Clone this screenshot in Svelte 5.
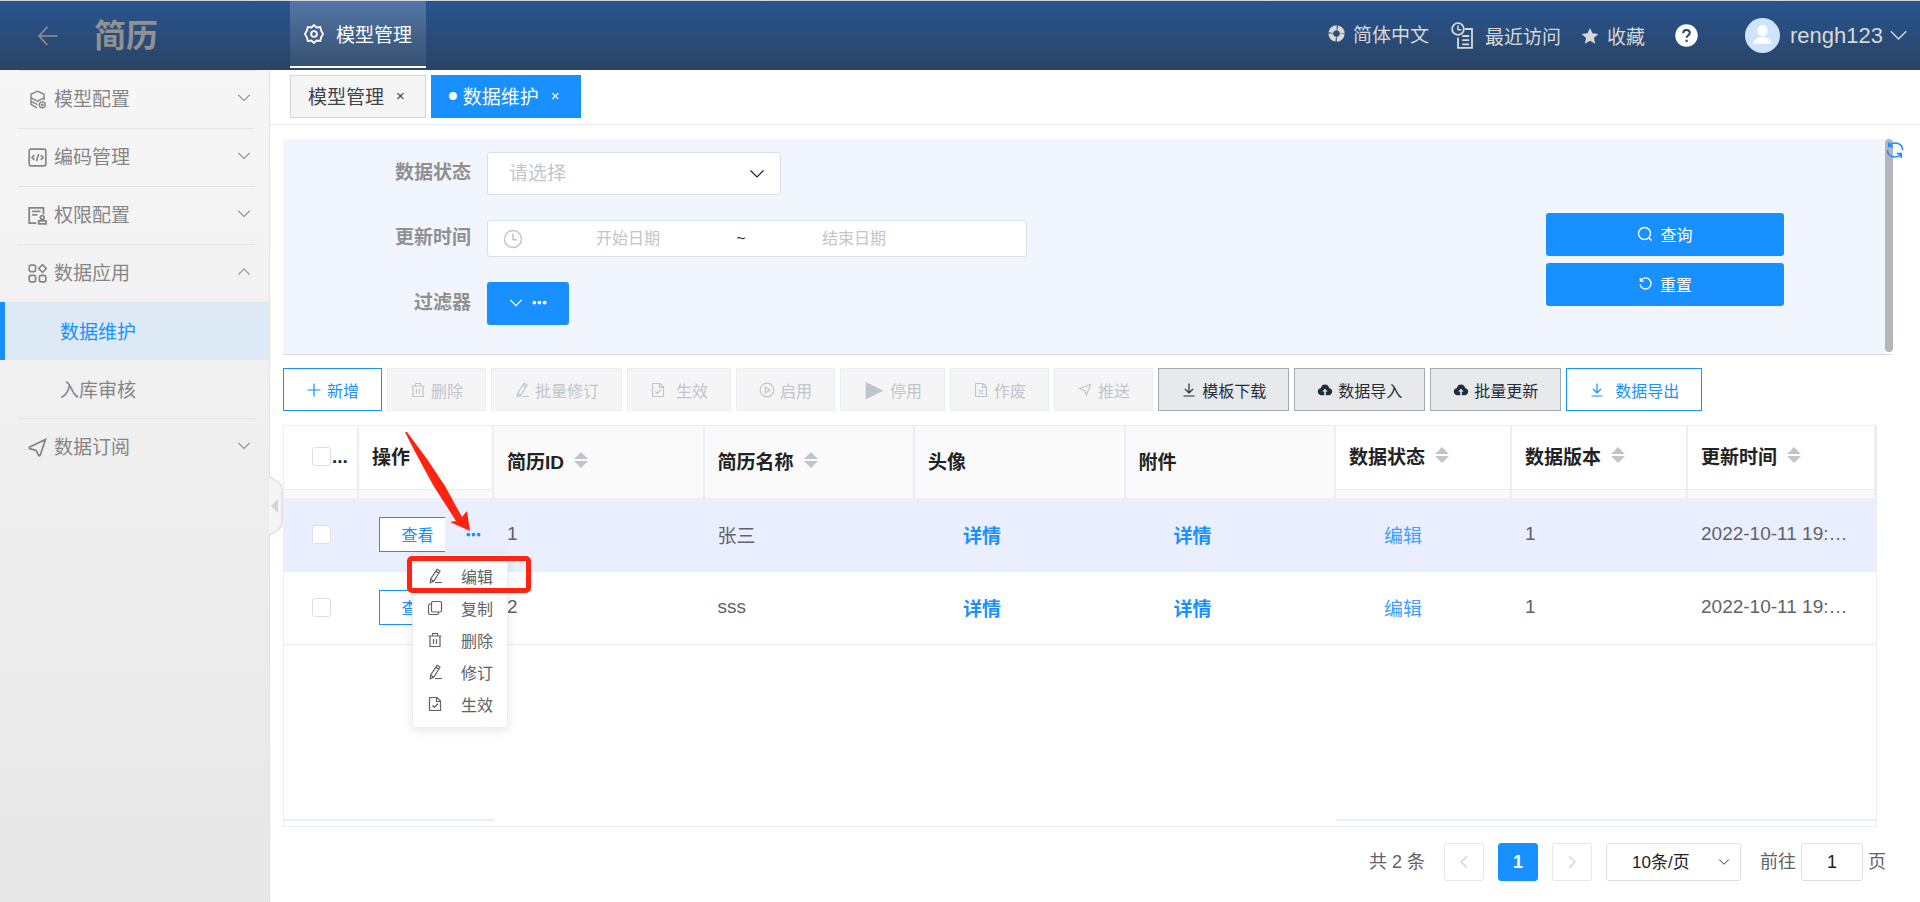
<script>
  const icons = {
    back: '<path d="M15 8H1.5M7.5 1.5L1.5 8l6 6.5"/>',
    gear: '<path d="M8 .9l2.1 1.9 2.9-.3.7 2.9 1.6 2.6-1.6 2.6-.7 2.9-2.9-.3L8 15.1l-2.1-1.9-2.9.3-.7-2.9L.7 8l1.6-2.6.7-2.9 2.9.3z" stroke-width="1.5"/><circle cx="8" cy="8" r="2.3" stroke-width="1.5"/>',
    ring: '<circle cx="8" cy="8" r="5.4" stroke-width="4.6" stroke-dasharray="7.5 .98" stroke-dashoffset="-.5"/>',
    recent: '<path d="M10 5h5v13.5H5V11M8 10h5M8 13h5M8 16h5" stroke-width="1.3"/><circle cx="5" cy="5" r="4.2" stroke-width="1.3"/><path d="M5 2.5V5.5h2.4" stroke-width="1.1"/>',
    star: '<path d="M8 .8l2.2 4.8 5.2.6-3.9 3.5 1.1 5.2L8 12.3l-4.6 2.6 1.1-5.2L.6 6.2l5.2-.6z" fill="currentColor" stroke="none"/>',
    help: '<circle cx="8" cy="8" r="7.8" fill="#fff" stroke="none"/><path d="M5.7 6.4c0-3 4.6-3 4.6-.2 0 1.6-2.2 1.6-2.2 3.4M8.1 11v1.5" stroke="#27415f" stroke-width="1.4"/>',
    avatar: '<circle cx="8" cy="8" r="8" fill="#cce4fd" stroke="none"/><ellipse cx="8" cy="5.8" rx="2.4" ry="2.7" fill="#fff" stroke="none"/><path d="M3.7 11.8c.3-2 1.8-2.6 3-3h2.6c1.2.4 2.7 1 3 3z" fill="#fff" stroke="none"/>',
    down: '<path d="M1.5 4.5L8 11l6.5-6.5"/>',
    up: '<path d="M1.5 11L8 4.5l6.5 6.5"/>',
    left: '<path d="M10.5 3l-5 5 5 5" stroke-width="1.5"/>',
    right: '<path d="M5.5 3l5 5-5 5" stroke-width="1.5"/>',
    layers: '<path d="M8 1l5.5 2.6v3L8 9.400 2.5 6.6v-3z"/><path d="M2.5 6.5v3L8 12.3M2.5 9.5v2.6L7.5 15M13.5 6.6v2"/><circle cx="12" cy="12.5" r="2.5"/><circle cx="12" cy="12.5" r=".6"/>',
    code: '<rect x="1" y="1" width="14" height="14" rx="1.5" stroke-width="1.4"/><path d="M5.3 6l-2 2 2 2M10.7 6l2 2-2 2M9 5l-2 6.2" stroke-width="1.3"/>',
    permission: '<path d="M7 14.5H1v-13h12V7M3.5 4.5h7M3.5 7.5H8" stroke-width="1.5"/><circle cx="12" cy="9.7" r="1.6" stroke-width="1.4"/><path d="M11.3 11v1.5H9V15h6.2v-2.5h-2.5V11" stroke-width="1.4"/>',
    apps: '<rect x="1" y="1" width="5.4" height="5.4" rx="1.5" stroke-width="1.4"/><rect x="1" y="9.6" width="5.4" height="5.4" rx="1.5" stroke-width="1.4"/><rect x="9.6" y="9.6" width="5.4" height="5.4" rx="1.5" stroke-width="1.4"/><path d="M12.2.6l3.2 3.2L12.2 7 9 3.8z" stroke-width="1.4"/>',
    send: '<path d="M14.700 1.3L10.300 14.500Q9.800 15.500 9 14.600L6.800 10.500 1.500 9Q.6 8.300 1.500 7.500z" stroke-width="1.500"/>',
    clock: '<circle cx="8" cy="8" r="6.8"/><path d="M8 4v4.500h3.500"/>',
    dots: '<g fill="currentColor" stroke="none"><circle cx="2.5" cy="8" r="2"/><circle cx="8" cy="8" r="2"/><circle cx="13.5" cy="8" r="2"/></g>',
    search: '<circle cx="7.5" cy="7.5" r="6"/><path d="M12 12l2.5 2.5"/>',
    reset: '<path d="M2.5 2v3.500H6M3 5.200C5 1.5 9.800 1 12.400 4c2.300 2.800 1.800 6.5-.6 8.500C8.300 15.3 3 13.500 2.300 9"/>',
    refresh: '<path d="M2.500 4.500C6 .2 14.500 1 14.800 8M13.500 11.500C10 15.800 1.500 15 1.200 8M2.500 1v3.800h3.800M13.500 15v-3.800H9.700" stroke-width="1.400"/>',
    plus: '<path d="M8 1.5v13M1.5 8h13"/>',
    trash: '<path d="M1.5 4h13M3 4v10.500h10V4M5.5 4V1.500h5V4M6.500 7v5M9.500 7v5"/>',
    edit: '<path d="M10 1.300l3 1.900-6.300 10-3.400 1.600.3-3.600zM8.800 3.200l3 1.900M3.700 11.200l3 2M8 14.500h7"/>',
    docCheck: '<path d="M2.500 1.500H10L13.500 5v9.500h-11zM9.500 1.500v4h4M5.300 9.300l2 2L11 7.800"/>',
    docCross: '<path d="M2.500 1.500H10L13.500 5v9.500h-11zM9.500 1.500v4h4M6 8l4 4M10 8l-4 4"/>',
    playCircle: '<circle cx="8" cy="8" r="6.800"/><path d="M6.300 5l4.400 3-4.400 3z"/>',
    play: '<path d="M2.500 3l11 5.500-11 5.500z" fill="currentColor"/>',
    plane: '<path d="M13.500 2.500L9.500 13l-2-4.500-5-2z"/>',
    download: '<path d="M8 1.500V11M4 7l4 4 4-4M2.500 14h11"/>',
    cloudUp: '<path d="M8 2.500C5.500 2.500 4.200 4 4 6 2 6.300.8 7.800.8 9.600c0 2 1.500 3.700 3.600 3.700h2.800V9.500H5.200L8 6.700l2.800 2.800h-2v3.800h2.800c2.100 0 3.600-1.700 3.600-3.700 0-1.800-1.200-3.300-3.200-3.600-.2-2-1.500-3.500-4-3.500z" fill="currentColor" stroke="none"/>',
    copy: '<rect x="4.500" y="1.500" width="10" height="10.500" rx="1.500"/><path d="M4.500 4H3C2 4 1.500 4.500 1.500 5.500V13c0 1 .5 1.500 1.500 1.500h7c1 0 1.500-.5 1.500-1.500v-1"/>'
  };

  const menus = [
    { icon: "layers", label: "模型配置" },
    { icon: "code", label: "编码管理" },
    { icon: "permission", label: "权限配置" },
    { icon: "apps", label: "数据应用", children: ["数据维护", "入库审核"] },
    { icon: "send", label: "数据订阅" }
  ];

  const tools = [
    { icon: "plus", label: "新增", kind: "primary" },
    { icon: "trash", label: "删除", kind: "off" },
    { icon: "edit", label: "批量修订", kind: "off" },
    { icon: "docCheck", label: "生效", kind: "off", wide: true },
    { icon: "playCircle", label: "启用", kind: "off" },
    { icon: "play", label: "停用", kind: "off", size: 22 },
    { icon: "docCross", label: "作废", kind: "off" },
    { icon: "plane", label: "推送", kind: "off" },
    { icon: "download", label: "模板下载", kind: "dark" },
    { icon: "cloudUp", label: "数据导入", kind: "dark" },
    { icon: "cloudUp", label: "批量更新", kind: "dark" },
    { icon: "download", label: "数据导出", kind: "primary", wide: true }
  ];

  const columns = [
    { label: "简历ID", sort: true },
    { label: "简历名称", sort: true },
    { label: "头像" },
    { label: "附件" },
    { label: "数据状态", sort: true, fixed: true },
    { label: "数据版本", sort: true, fixed: true },
    { label: "更新时间", sort: true, fixed: true }
  ];

  const rows = [
    { id: 1, name: "张三", version: 1, time: "2022-10-11 19:20:35" },
    { id: 2, name: "sss", version: 1, time: "2022-10-11 19:18:02" }
  ];

  const row_menu = [
    { icon: "edit", label: "编辑" },
    { icon: "copy", label: "复制" },
    { icon: "trash", label: "删除" },
    { icon: "edit", label: "修订" },
    { icon: "docCheck", label: "生效" }
  ];

  let active_child = $state("数据维护");
  let open_row = $state(1);
  let page = $state(1);
</script>

{#snippet icon(name, size = 16)}
  <svg
    class="icon"
    width={size}
    height={size}
    viewBox={name === "recent" ? "0 0 20 20" : "0 0 16 16"}
    aria-hidden="true">{@html icons[name]}</svg
  >
{/snippet}

<div class="app">
  <header>
    <div class="brand">
      <button class="plain" aria-label="返回">{@render icon("back", 22)}</button>
      <h1>简历</h1>
    </div>
    <a class="module" href="#model">{@render icon("gear", 20)}模型管理</a>
    <nav class="links">
      <a class="lang" href="#lang">{@render icon("ring", 17)}简体中文</a>
      <a class="recent" href="#recent">{@render icon("recent", 28)}最近访问</a>
      <a class="fav" href="#fav">{@render icon("star", 18)}收藏</a>
      <a class="help" href="#help" aria-label="帮助">{@render icon("help", 23)}</a>
      <button class="plain user">
        {@render icon("avatar", 35)}
        <span>rengh123</span>
        {@render icon("down", 19)}
      </button>
    </nav>
  </header>

  <div class="body">
    <aside>
      <ul class="menu">
        {#each menus as m}
          <li>
            <button class="menu_item">
              {@render icon(m.icon, 19)}
              <span>{m.label}</span>
              {@render icon(m.children ? "up" : "down", 14)}
            </button>
            {#if m.children}
              {#each m.children as c}
                <button
                  class="sub_item"
                  class:active={active_child === c}
                  onclick={() => (active_child = c)}>{c}</button
                >
              {/each}
            {/if}
          </li>
        {/each}
      </ul>
      <button class="collapse" aria-label="收起">
        <svg width="14" height="60" viewBox="0 0 14 60" aria-hidden="true">
          <path d="M0 .5L9 6Q13 9 13 14V46Q13 51 9 54L0 59.5" fill="#f5f5f5" stroke="#e1e5ea" stroke-width="2" />
          <path d="M9 23v14L2 30z" fill="#d4d4d4" />
        </svg>
      </button>
    </aside>

    <main>
      <div class="tabs">
        <button class="tab">模型管理<span class="close">×</span></button>
        <button class="tab current"><i></i>数据维护<span class="close">×</span></button>
      </div>

      <div class="content">
        <section class="search">
          <form onsubmit={(e) => e.preventDefault()}>
            <div class="fields">
              <label for="status">数据状态</label>
              <div class="select status">
                <select id="status">
                  <option>请选择</option>
                </select>
                {@render icon("down", 16)}
              </div>

              <label for="from">更新时间</label>
              <div class="range">
                {@render icon("clock", 20)}
                <input id="from" placeholder="开始日期" />
                <span>~</span>
                <input aria-label="结束日期" placeholder="结束日期" />
              </div>

              <label for="filter">过滤器</label>
              <button id="filter" type="button" class="filled filter">
                {@render icon("down", 14)}{@render icon("dots", 15)}
              </button>
            </div>
            <div class="actions">
              <button class="filled">{@render icon("search", 16)}查询</button>
              <button class="filled" type="reset">{@render icon("reset", 15)}重置</button>
            </div>
          </form>
          <div class="scrollbar"></div>
          <button class="plain refresh" aria-label="刷新">{@render icon("refresh", 18)}</button>
        </section>

        <div class="toolbar">
          {#each tools as t}
            <button class="tool {t.kind}" class:wide={t.wide} disabled={t.kind === "off"}>
              {@render icon(t.icon, t.size)}{t.label}
            </button>
          {/each}
        </div>

        <div class="grid">
          <table>
            <colgroup>
              <col class="c_check" />
              <col class="c_op" />
              <col /><col /><col /><col />
              <col class="c_state" />
              <col class="c_state" />
              <col class="c_time" />
            </colgroup>
            <thead>
              <tr>
                <th>
                  <div class="head fixed check">
                    <input type="checkbox" aria-label="全选" />...
                  </div>
                </th>
                <th><div class="head fixed">操作</div></th>
                {#each columns as c}
                  <th>
                    <div class="head" class:fixed={c.fixed}>
                      {c.label}
                      {#if c.sort}
                        <svg width="14" height="16" viewBox="0 0 14 16" aria-hidden="true">
                          <path d="M7 0l7 7H0zM0 9h14l-7 7z" fill="#c0c4cc" />
                        </svg>
                      {/if}
                    </div>
                  </th>
                {/each}
              </tr>
            </thead>
            <tbody>
              {#each rows as r}
                <tr class:hover={r.id === open_row}>
                  <td class="check"><input type="checkbox" aria-label="选择 {r.id}" /></td>
                  <td class="op">
                    <div class="op_box">
                      <button class="view">查看</button>
                      <button class="plain more" aria-label="更多" onclick={() => (open_row = r.id)}>
                        {@render icon("dots", 15)}
                      </button>
                      {#if r.id === open_row}
                        <ul class="dropdown">
                          {#each row_menu as item}
                            <li>
                              <button class="plain">{@render icon(item.icon)}{item.label}</button>
                            </li>
                          {/each}
                        </ul>
                        <div class="mark"></div>
                        <svg class="arrow" width="68" height="100" viewBox="0 0 68 100" aria-hidden="true">
                          <path d="M0 0h2l20 27 18 27 17 31 5-6 3 20-20-9 6-1-23-36L8 16z" fill="#ff2310" />
                        </svg>
                      {/if}
                    </div>
                  </td>
                  <td>{r.id}</td>
                  <td>{r.name}</td>
                  <td class="inset"><a class="bold" href="#photo">详情</a></td>
                  <td class="inset"><a class="bold" href="#attach">详情</a></td>
                  <td class="inset"><a class="state" href="#state">编辑</a></td>
                  <td>{r.version}</td>
                  <td>{r.time}</td>
                </tr>
              {/each}
            </tbody>
          </table>
          <div class="fixed_ends"><i></i><i></i></div>
        </div>

        <div class="pager">
          <span class="total">共 2 条</span>
          <button class="page" disabled aria-label="上一页">{@render icon("left", 18)}</button>
          <button class="page current">1</button>
          <button class="page" disabled aria-label="下一页">{@render icon("right", 18)}</button>
          <div class="select size">
            <select aria-label="每页条数">
              <option>10条/页</option>
            </select>
            {@render icon("down", 12)}
          </div>
          <label><span>前往</span><input bind:value={page} /><span>页</span></label>
        </div>
      </div>
    </main>
  </div>
</div>

<style>
  :global(body) {
    margin: 0;
    background: #fff;
  }
  .app {
    min-height: 100vh;
    display: flex;
    flex-direction: column;
    font-family: "Liberation Sans", "Noto Sans CJK SC", sans-serif;
    font-size: 19px;
    color: #606266;
  }
  .app * {
    box-sizing: border-box;
  }
  button,
  input,
  select {
    font: inherit;
    color: inherit;
    margin: 0;
    border-radius: 0;
  }
  button {
    padding: 0;
    cursor: pointer;
  }
  a {
    text-decoration: none;
    color: inherit;
  }
  ul {
    list-style: none;
    margin: 0;
    padding: 0;
  }
  .icon {
    flex: none;
    display: block;
    fill: none;
    stroke: currentColor;
    stroke-width: 1.2;
  }
  .plain {
    border: 0;
    background: none;
  }

  header {
    height: 70px;
    display: flex;
    border-top: 1px solid #d0d6dc;
    background: linear-gradient(#28548f, #2a4464);
    color: #d8d8d8;
    font-weight: 300;
  }
  .brand {
    width: 290px;
    padding-left: 37px;
    display: flex;
    align-items: center;
    gap: 35px;
    color: #919191;
  }
  h1 {
    margin: 0;
    font-size: 32px;
    line-height: 40px;
  }
  .module {
    width: 136px;
    height: 67px;
    display: flex;
    align-items: center;
    justify-content: center;
    gap: 12px;
    color: #fff;
    font-weight: 400;
    background: linear-gradient(rgba(255, 255, 255, 0.2), rgba(255, 255, 255, 0.06));
    border-bottom: 2px solid #fff;
  }
  .links {
    margin-left: auto;
    padding-right: 12px;
    display: flex;
    align-items: center;
    font-weight: 400;
  }
  .links a {
    display: flex;
    align-items: center;
    gap: 8px;
  }
  .links .lang {
    padding-bottom: 4px;
  }
  .recent {
    margin-left: 22px;
  }
  .links .recent {
    gap: 6px;
  }
  .fav {
    margin-left: 20px;
  }
  .help {
    margin: 0 47px 0 30px;
  }
  .user {
    display: flex;
    align-items: center;
    gap: 10px;
    font-size: 22px;
  }
  .user .icon:last-child {
    margin-left: -4px;
  }

  .body {
    flex: 1;
    display: flex;
  }
  aside {
    position: relative;
    width: 270px;
    flex: none;
    border-right: 1px solid #dfe1e5;
    background: linear-gradient(#f6f6f6, #e7e7e7);
    color: #858585;
  }
  .menu li {
    padding: 0 14px 0 18px;
  }
  .menu_item {
    width: 100%;
    height: 58px;
    padding: 0 4px 0 10px;
    display: flex;
    align-items: center;
    gap: 7px;
    border: 0;
    border-top: 1px solid #e2e4e8;
    background: none;
  }
  .menu_item span {
    flex: 1;
    padding-bottom: 4px;
    text-align: left;
  }
  .menu_item .icon:last-child {
    margin-bottom: 4px;
  }
  .sub_item {
    display: block;
    width: 269px;
    height: 58px;
    margin-left: -18px;
    padding: 0 0 2px 55px;
    border: 0;
    border-left: 5px solid transparent;
    background: none;
    text-align: left;
  }
  .sub_item.active {
    border-color: #1890ff;
    background: #dde9f5;
    color: #1890ff;
  }
  .collapse {
    position: absolute;
    left: 269px;
    top: 406px;
    width: 14px;
    height: 60px;
    border: 0;
    background: none;
  }
  .collapse svg {
    display: block;
  }

  main {
    flex: 1;
    min-width: 0;
  }
  .tabs {
    height: 55px;
    padding: 5px 20px 0;
    display: flex;
    gap: 5px;
    border-bottom: 1px solid #e6e9f0;
  }
  .tab {
    height: 43px;
    padding: 0 20px 2px 17px;
    display: flex;
    align-items: center;
    gap: 12px;
    border: 1px solid #d0d5de;
    background: #f5f5f5;
    color: #404348;
  }
  .tab i {
    width: 8px;
    height: 8px;
    margin-right: -6px;
    border-radius: 50%;
    background: #fff;
  }
  .tab.current {
    border-color: #1890ff;
    background: #1890ff;
    color: #fff;
  }
  .close {
    font-size: 15px;
  }

  .content {
    padding: 14px 27px 0 13px;
  }
  .search {
    position: relative;
    display: flex;
    border-bottom: 1px solid #d8dae2;
  }
  form {
    flex: 1;
    display: flex;
    justify-content: space-between;
    padding: 13px 101px 29px 0;
    background: #f1f5fe;
  }
  .fields {
    display: grid;
    grid-template-columns: 188px 540px;
    column-gap: 16px;
    row-gap: 25px;
    align-items: center;
  }
  .fields label {
    padding-bottom: 6px;
    text-align: right;
    font-weight: bold;
    color: #909090;
  }
  .select {
    display: flex;
    align-items: center;
    border: 1px solid #dcdfe6;
    border-radius: 3px;
    background: #fff;
    color: #222;
  }
  .select select {
    flex: 1;
    height: 100%;
    appearance: none;
    border: 0;
    background: none;
  }
  .select .icon {
    pointer-events: none;
  }
  .status {
    width: 294px;
    height: 43px;
    padding: 0 15px 0 21px;
  }
  .status select {
    color: #c0c4cc;
  }
  .range {
    height: 37px;
    padding: 0 15px;
    display: flex;
    align-items: center;
    border: 1px solid #dcdfe6;
    border-radius: 3px;
    background: #fff;
    font-size: 16px;
    color: #303133;
  }
  .range .icon {
    color: #c0c4cc;
  }
  .range input {
    width: 210px;
    padding: 0;
    border: 0;
    background: none;
    text-align: center;
  }
  .range span {
    width: 16px;
    text-align: center;
  }
  .range input::placeholder {
    color: #c0c4cc;
  }
  .filled {
    height: 43px;
    padding-bottom: 2px;
    display: flex;
    align-items: center;
    justify-content: center;
    gap: 7px;
    border: 0;
    border-radius: 3px;
    background: #1890ff;
    color: #fff;
    font-size: 16px;
  }
  .filled .icon {
    stroke-width: 1.4;
  }
  .filter {
    width: 82px;
    gap: 9px;
  }
  .actions {
    width: 238px;
    padding-top: 61px;
    display: flex;
    flex-direction: column;
    gap: 7px;
  }
  .scrollbar {
    width: 8px;
    margin-bottom: 2px;
    border-radius: 4px;
    background: #b5b6bc;
  }
  .refresh {
    position: absolute;
    right: -11px;
    top: 2px;
    color: #1890ff;
  }

  .toolbar {
    margin: 13px 0 14px;
    display: flex;
    gap: 5px;
  }
  .tool {
    height: 43px;
    padding: 0 22px;
    display: flex;
    align-items: center;
    gap: 5px;
    border: 1px solid #ebeef5;
    background: #f5f5f5;
    color: #c0c4cc;
    font-size: 16px;
    white-space: nowrap;
  }
  .tool.wide {
    gap: 10px;
  }
  .tool.primary {
    border-color: #1890ff;
    background: #fff;
    color: #1890ff;
  }
  .tool.dark {
    border-color: #a5a9b0;
    background: #e8e9eb;
    color: #1f2d3d;
  }

  .grid {
    min-height: 402px;
    margin-right: 16px;
    display: flex;
    flex-direction: column;
    border: 1px solid #ebeef5;
  }
  table {
    width: 100%;
    table-layout: fixed;
    border-collapse: separate;
    border-spacing: 0;
  }
  .c_check {
    width: 75px;
  }
  .c_op {
    width: 135px;
  }
  .c_state {
    width: 176px;
  }
  .c_time {
    width: 188px;
  }
  th {
    height: 73px;
    padding: 0;
    vertical-align: top;
    text-align: left;
    background: #fafafa;
    border-right: 2px solid #ebeef5;
    border-bottom: 1px solid #ebeef5;
    color: #222;
  }
  .head {
    height: 72px;
    padding: 0 14px 4px 13px;
    display: flex;
    align-items: center;
    gap: 10px;
  }
  .head.fixed {
    height: 64px;
    padding-bottom: 5px;
    background: #fff;
    border-bottom: 1px solid #ebeef5;
  }
  .head.check {
    padding: 0 0 2px 28px;
    gap: 1px;
  }
  td {
    height: 73px;
    padding: 0 14px 2px 13px;
    border-bottom: 1px solid #ebeef5;
    white-space: nowrap;
    overflow: hidden;
    text-overflow: ellipsis;
  }
  td:last-child {
    padding-right: 28px;
  }
  .hover td {
    background: #e9efff;
  }
  td.check {
    padding-left: 28px;
  }
  input[type="checkbox"] {
    appearance: none;
    display: block;
    flex: none;
    width: 19px;
    height: 19px;
    border: 1px solid #dcdfe6;
    border-radius: 3px;
    background: #fff;
  }
  td.inset {
    padding-left: 48px;
  }
  .bold {
    font-weight: bold;
    color: #1890ff;
  }
  .state {
    color: #409eff;
  }
  td.op {
    padding: 0 0 2px 20px;
    overflow: visible;
  }
  .op_box {
    position: relative;
    display: flex;
    align-items: center;
    gap: 21px;
  }
  .view {
    width: 66px;
    height: 35px;
    padding-left: 10px;
    border: 1px solid #1890ff;
    border-right: 0;
    background: #fff;
    color: #1890ff;
    font-size: 16px;
  }
  .more {
    color: #1890ff;
  }
  .dropdown {
    position: absolute;
    z-index: 2;
    left: 33px;
    top: 37px;
    width: 96px;
    padding: 5px 0 7px;
    border: 1px solid #ebeef5;
    border-radius: 3px;
    background: #fff;
    box-shadow: 0 2px 12px rgba(0, 0, 0, 0.1);
  }
  .dropdown button {
    width: 100%;
    height: 32px;
    padding-left: 14px;
    display: flex;
    align-items: center;
    gap: 18px;
    font-size: 16px;
  }
  .mark {
    position: absolute;
    z-index: 3;
    left: 28px;
    top: 39px;
    width: 124px;
    height: 37px;
    border: 5px solid #ff2310;
    border-radius: 5px;
    pointer-events: none;
  }
  .arrow {
    position: absolute;
    z-index: 3;
    left: 26px;
    top: -85px;
    pointer-events: none;
  }
  .fixed_ends {
    margin: auto 0 5px;
    display: flex;
    justify-content: space-between;
  }
  .fixed_ends i {
    width: 210px;
    height: 2px;
    background: #ebeef5;
  }
  .fixed_ends i:last-child {
    width: 540px;
  }

  .pager {
    margin: 16px 7px 0 0;
    display: flex;
    align-items: center;
    justify-content: flex-end;
    gap: 14px;
    font-size: 18px;
  }
  .total {
    margin-right: 5px;
    padding-bottom: 4px;
  }
  .page {
    width: 40px;
    height: 38px;
    display: flex;
    align-items: center;
    justify-content: center;
    border: 1px solid #e4e7ed;
    border-radius: 3px;
    background: #fff;
    color: #d5d9e0;
  }
  .page.current {
    border-color: #1890ff;
    background: #1890ff;
    color: #fff;
    font-weight: bold;
  }
  .size {
    width: 135px;
    height: 38px;
    padding: 0 10px 0 25px;
    font-size: 17px;
  }
  .pager label {
    margin-left: 5px;
    display: flex;
    align-items: center;
    gap: 5px;
  }
  .pager label span {
    padding-bottom: 4px;
  }
  .pager input {
    width: 62px;
    height: 38px;
    border: 1px solid #dcdfe6;
    border-radius: 3px;
    text-align: center;
    color: #222;
  }
</style>
